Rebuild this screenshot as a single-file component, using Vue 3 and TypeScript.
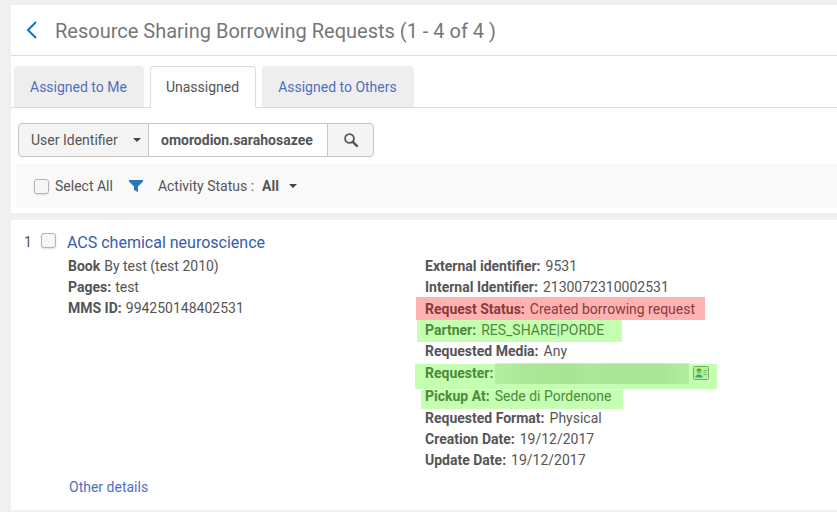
<script setup lang="ts">
import { ref } from 'vue'

interface Field {
  label: string
  value: string
  mark?: string
  card?: boolean
}

const tabs = ['Assigned to Me', 'Unassigned', 'Assigned to Others']
const activeTab = ref('Unassigned')
const query = ref('omorodion.sarahosazee')
const selectAll = ref(false)
const selected = ref(false)

const bookFields: Field[] = [
  { label: 'Book', value: 'By test (test 2010)' },
  { label: 'Pages:', value: 'test' },
  { label: 'MMS ID:', value: '994250148402531' },
]

const requestFields: Field[] = [
  { label: 'External identifier:', value: '9531' },
  { label: 'Internal Identifier:', value: '2130072310002531' },
  { label: 'Request Status:', value: 'Created borrowing request', mark: 'status' },
  { label: 'Partner:', value: 'RES_SHARE|PORDE', mark: 'partner' },
  { label: 'Requested Media:', value: 'Any' },
  { label: 'Requester:', value: '', mark: 'requester', card: true },
  { label: 'Pickup At:', value: 'Sede di Pordenone', mark: 'pickup' },
  { label: 'Requested Format:', value: 'Physical' },
  { label: 'Creation Date:', value: '19/12/2017' },
  { label: 'Update Date:', value: '19/12/2017' },
]
</script>

<template>
  <main class="page">
    <section class="panel">
      <header class="title-bar">
        <a href="#" class="back" aria-label="Back">
          <svg width="12" height="18" viewBox="0 0 12 18"><path d="M10 1 2 9l8 8" fill="none" stroke="#0f75bd" stroke-width="2" /></svg>
        </a>
        <h1>Resource Sharing Borrowing Requests (1 - 4 of 4 )</h1>
      </header>

      <nav class="tabs">
        <button
          v-for="tab in tabs"
          :key="tab"
          type="button"
          class="tab"
          :class="{ active: tab === activeTab }"
          @click="activeTab = tab"
        >{{ tab }}</button>
      </nav>

      <form class="search" @submit.prevent>
        <select class="search-field" aria-label="Search field">
          <option>User Identifier</option>
        </select>
        <input v-model="query" class="search-text" type="text" aria-label="Search text" />
        <button class="search-go" type="submit" aria-label="Search">
          <svg width="14" height="14" viewBox="0 0 14 14"><circle cx="5.5" cy="5.5" r="4.4" fill="none" stroke="#555" stroke-width="1.8" /><path d="m8.8 8.8 4 4" stroke="#555" stroke-width="2.6" stroke-linecap="round" /></svg>
        </button>
      </form>

      <div class="filters">
        <label class="select-all"><input v-model="selectAll" type="checkbox" class="check" />Select All</label>
        <svg class="funnel" width="14" height="12" viewBox="0 0 14 12"><path d="M0 0h14v1.500L9 6.500V12L5 10V6.500L0 1.500z" fill="#2b78b9" /></svg>
        <label class="activity">Activity Status :
          <select class="status-pick"><option>All</option></select>
        </label>
      </div>
    </section>

    <section class="panel record">
      <span class="index">1</span>
      <input v-model="selected" type="checkbox" class="check" aria-label="Select ACS chemical neuroscience" />
      <div class="body">
        <h2><a href="#">ACS chemical neuroscience</a></h2>
        <div class="columns">
          <div class="fields">
            <div v-for="field in bookFields" :key="field.label" class="field">
              <b>{{ field.label }}</b> {{ field.value }}
            </div>
          </div>
          <div class="fields request">
            <div v-for="field in requestFields" :key="field.label" class="field" :class="field.mark">
              <b>{{ field.label }}</b> {{ field.value }}
              <template v-if="field.card">
                <span class="redacted"></span>
                <svg class="card" width="16" height="14" viewBox="0 0 16 14">
                  <rect x=".5" y=".5" width="15" height="13" rx="1" fill="#e6eee6" stroke="#888" />
                  <path d="M2.500 11.500V10l2-1.500h3l2 1.500v1.500z" fill="#2389bd" />
                  <circle cx="6" cy="5.200" r="2.200" fill="#c4a04c" />
                  <path d="M3.800 5V3.500Q6 1.500 8.200 3.500V5Q6 3.500 3.800 5" fill="#665f42" />
                  <path d="M10.500 4.500H14M10.500 6.500H13M10.500 8.500H14" stroke="#999" />
                </svg>
              </template>
            </div>
          </div>
        </div>
        <a href="#" class="more">Other details</a>
      </div>
    </section>
  </main>
</template>

<style>
body {
  background: #f0f0f0;
}
</style>

<style scoped>
.page {
  display: flex;
  flex-direction: column;
  gap: 7px;
  padding: 5px 0 2px 11px;
  font: 14px/21px Roboto, "Liberation Sans", sans-serif;
  color: #555;
}
.page * {
  box-sizing: border-box;
}
button, input, select {
  margin: 0;
  font: inherit;
  color: inherit;
}
a {
  color: #4f70bc;
  text-decoration: none;
}
.panel {
  background: #fff;
}
.title-bar {
  display: flex;
  align-items: center;
  gap: 17px;
  height: 51px;
  padding-left: 15px;
  border-bottom: 1px solid #ddd;
}
.back {
  display: flex;
}
h1 {
  margin: 0;
  padding-top: 1px;
  font-size: 20px;
  font-weight: 400;
  line-height: 24px;
  color: #777;
}
.tabs {
  display: flex;
  gap: 6px;
  padding: 10px 3px 0;
  border-bottom: 1px solid #ddd;
}
.tab {
  height: 41px;
  padding: 1px 17px 0 16px;
  border: 0;
  border-radius: 4px 4px 0 0;
  background: #eee;
  color: #4f70bc;
}
.tab.active {
  height: 42px;
  margin-bottom: -1px;
  padding: 0 16px 0 15px;
  border: 1px solid #ddd;
  border-bottom: 0;
  background: #fff;
  color: #555;
}
.search {
  display: flex;
  height: 34px;
  margin: 15px 0 7px 7px;
}
.search-field, .status-pick {
  appearance: none;
  background: url("data:image/svg+xml,%3Csvg xmlns='http://www.w3.org/2000/svg' width='8' height='4'%3E%3Cpath d='M0 0h8L4 4z' fill='%23444'/%3E%3C/svg%3E") no-repeat right center;
}
.search-field {
  width: 131px;
  padding: 0 12px;
  border: 1px solid #c6c6c6;
  border-radius: 4px 0 0 4px;
  background-color: #f4f4f4;
  background-position: right 7px center;
}
.search-text {
  width: 178px;
  padding: 0 12px;
  border: solid #c6c6c6;
  border-width: 1px 0;
  font-weight: 700;
}
.search-go {
  display: flex;
  align-items: center;
  justify-content: center;
  width: 47px;
  padding: 0;
  border: 1px solid #c6c6c6;
  border-radius: 0 4px 4px 0;
  background: #f4f4f4;
}
.filters {
  display: flex;
  align-items: center;
  height: 44px;
  margin-left: 5px;
  padding-left: 18px;
  background: #f9f9f9;
}
.panel:first-child {
  padding-bottom: 5px;
}
.check {
  flex: none;
  appearance: none;
  width: 15px;
  height: 15px;
  border: 1px solid #b4b4b4;
  border-radius: 3px;
  background: #f6f6f6;
  box-shadow: 0 1px 2px #ddd;
}
.check:checked {
  background: #2b78b9;
}
.select-all {
  display: flex;
  align-items: center;
  gap: 6px;
}
.funnel {
  margin: 0 15px 0 16px;
}
.activity {
  display: flex;
  align-items: center;
  gap: 8px;
}
.status-pick {
  width: 35px;
  padding: 0;
  border: 0;
  font-weight: 700;
}
.record {
  display: flex;
  align-items: flex-start;
  padding: 12px 0 12px 13px;
}
.record > .check {
  margin: 1px 11px 0 0;
}
.index {
  width: 17px;
}
.body {
  flex: 1;
}
h2 {
  margin: 0 0 3px;
  font-size: 16px;
  font-weight: 400;
  line-height: 21px;
}
h2 a {
  color: #355cad;
}
.columns {
  display: grid;
  grid-template-columns: 357px 1fr;
  padding-left: 1px;
}
.field {
  position: relative;
  display: flex;
  align-items: center;
  gap: 4px;
  width: fit-content;
  height: 21px;
  white-space: nowrap;
}
.request .field {
  gap: 5px;
}
.field.status, .field.requester {
  height: 22px;
}
.field.pickup {
  height: 24px;
}
.request .requester {
  gap: 2px;
}
.status::after, .partner::after, .requester::after, .pickup::after {
  content: "";
  position: absolute;
  background: rgba(64, 255, 0, 0.3);
  pointer-events: none;
}
.status::after {
  inset: -1px -10px 0 -9px;
  background: rgba(255, 0, 0, 0.3);
}
.partner::after {
  inset: 0 -18px -1px -8px;
}
.requester::after {
  inset: 2px -8px -5px -10px;
}
.pickup::after {
  inset: 6px -11px -1px -4px;
}
.redacted {
  width: 194px;
  height: 21px;
  margin-right: 2px;
  background: linear-gradient(90deg, #e8e8e8, #dcdcdc 15%, #d8d8d8 40%, #dedede 48%, #d9d9d9 60%, #dadada 85%, #e4e4e4);
}
.more {
  display: block;
  width: fit-content;
  margin: 6px 0 0 2px;
}
</style>
